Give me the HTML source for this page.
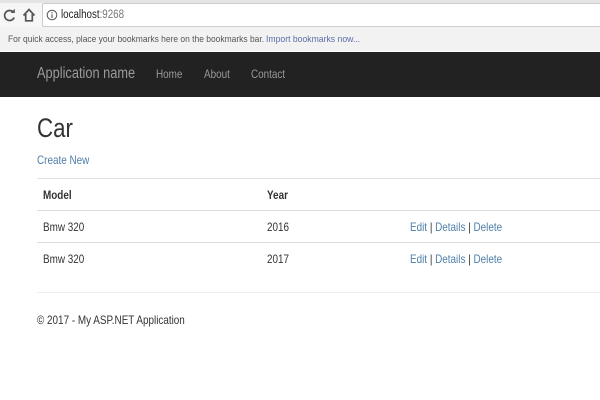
<!DOCTYPE html>
<html>
<head>
<meta charset="utf-8">
<style>
html,body{margin:0;padding:0;width:600px;height:400px;overflow:hidden;background:#fff;font-family:"Liberation Sans",sans-serif;color:#333}
div,a,span{position:absolute;white-space:nowrap}
.s{transform:scaleX(.825);transform-origin:0 0}
.l{color:#4f7eaa}
.t{font-size:12px;line-height:16px;color:#333}
.hr{left:37px;right:0;height:1px;background:#ddd}
.nav{font-size:12px;line-height:16px;color:#999;top:66px}
</style>
</head>
<body>
<div style="left:0;top:0;width:600px;height:3px;background:#e4e4e4"></div>
<div style="left:0;top:3px;width:600px;height:24px;background:#f6f6f6"></div>
<svg style="position:absolute;left:0;top:4px" width="42" height="22" viewBox="0 0 42 22">
<path d="M13.4 8.2 A5 5 0 1 0 14.2 13.5" fill="none" stroke="#555" stroke-width="1.7"/>
<path d="M10.6 9 L14.8 9 L14.8 4.8 Z" fill="#555"/>
<path d="M23.5 11.5 L29 5.5 L34.5 11.5 M25.7 10 V16.8 H32.3 V10" fill="none" stroke="#555" stroke-width="1.7"/>
</svg>
<div style="left:42px;top:3px;width:558px;height:24px;background:#fff;border:1px solid #ccc;border-right:0;box-sizing:border-box;border-radius:2px 0 0 2px"></div>
<svg style="position:absolute;left:46px;top:9px" width="12" height="12" viewBox="0 0 12 12">
<circle cx="6" cy="6" r="4.8" fill="none" stroke="#555" stroke-width="1"/>
<path d="M6 5.2V9M6 3v1.3" stroke="#555" stroke-width="1.1"/>
</svg>
<div style="left:61px;top:7px;font-size:11.5px;line-height:16px;color:#222;transform:scaleX(.85);transform-origin:0 0">localhost<span style="position:static;color:#777">:9268</span></div>
<div style="left:0;top:27px;width:600px;height:24px;background:#f2f2f2"></div>
<div style="left:8px;top:32px;font-size:9.2px;line-height:14px;color:#555;transform:scaleX(.92);transform-origin:0 0">For quick access, place your bookmarks here on the bookmarks bar.</div>
<div style="left:266px;top:32px;font-size:9.2px;line-height:14px;color:#5a6ea8;transform:scaleX(.94);transform-origin:0 0">Import bookmarks now...</div>
<div style="left:0;top:51px;width:600px;height:1px;background:#fff"></div>
<div style="left:0;top:52px;width:600px;height:45px;background:#222"></div>
<div class="s" style="left:37px;top:65px;font-size:15.5px;line-height:18px;color:#9a9a9a">Application name</div>
<div class="nav s" style="left:156px">Home</div>
<div class="nav s" style="left:204px">About</div>
<div class="nav s" style="left:251px">Contact</div>
<div class="s" style="left:37px;top:112px;font-size:27px;line-height:32px;color:#333">Car</div>
<a class="t l s" style="left:37px;top:152px;color:#4f7eaa">Create New</a>
<div class="hr" style="top:178px;height:1px;background:#e2e2e2"></div>
<div class="t s" style="left:43px;top:187px;font-weight:bold">Model</div>
<div class="t s" style="left:267px;top:187px;font-weight:bold">Year</div>
<div class="hr" style="top:210px"></div>
<div class="t s" style="left:43px;top:219px">Bmw 320</div>
<div class="t s" style="left:267px;top:219px">2016</div>
<div class="t s" style="left:410px;top:219px"><span class="l" style="position:static">Edit</span> | <span class="l" style="position:static">Details</span> | <span class="l" style="position:static">Delete</span></div>
<div class="hr" style="top:242px"></div>
<div class="t s" style="left:43px;top:251px">Bmw 320</div>
<div class="t s" style="left:267px;top:251px">2017</div>
<div class="t s" style="left:410px;top:251px"><span class="l" style="position:static">Edit</span> | <span class="l" style="position:static">Details</span> | <span class="l" style="position:static">Delete</span></div>
<div class="hr" style="top:292px;background:#eee"></div>
<div class="t s" style="left:37px;top:312px">© 2017 - My ASP.NET Application</div>
</body>
</html>
